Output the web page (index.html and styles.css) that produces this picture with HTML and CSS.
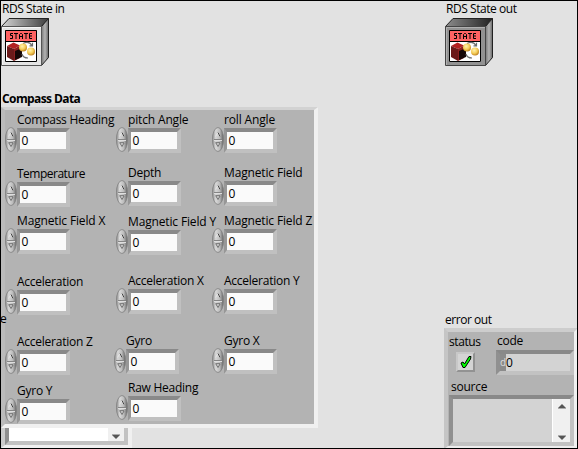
FILE: index.html
```html
<!DOCTYPE html>
<html lang="en">
<head>
<meta charset="utf-8">
<title>RDS Compass Data</title>
<link rel="stylesheet" href="styles.css">
</head>
<body>
<svg class="defs" width="0" height="0">
  <defs>
    <linearGradient id="metal" x1="0" y1="0" x2="1" y2="0">
      <stop offset="0" stop-color="#8c8c8c"/><stop offset=".3" stop-color="#d8d8d8"/>
      <stop offset=".65" stop-color="#bcbcbc"/><stop offset="1" stop-color="#606060"/>
    </linearGradient>
    <linearGradient id="lid" x1="0" y1="0" x2="1" y2="0">
      <stop offset="0" stop-color="#d5d5d5"/><stop offset="1" stop-color="#3c3c3c"/>
    </linearGradient>
    <linearGradient id="lid-dark" x1="0" y1="0" x2="1" y2="0">
      <stop offset="0" stop-color="#8c8c8c"/><stop offset="1" stop-color="#222"/>
    </linearGradient>
    <linearGradient id="side" x1="0" y1="0" x2="1" y2="0">
      <stop offset="0" stop-color="#777"/><stop offset=".5" stop-color="#b4b4b4"/><stop offset="1" stop-color="#666"/>
    </linearGradient>
    <radialGradient id="gold" cx=".4" cy=".35" r=".7">
      <stop offset="0" stop-color="#fff2b0"/><stop offset=".55" stop-color="#f5cd58"/><stop offset="1" stop-color="#b87818"/>
    </radialGradient>
    <symbol id="spin" viewBox="0 0 12 25">
      <ellipse cx="6" cy="12.5" rx="5.6" ry="12" fill="url(#metal)" stroke="#808080" stroke-width=".8"/>
      <path d="M2 12.5H10" stroke="#858585"/>
      <path d="M2 13.5H10" stroke="#dedede"/>
      <path d="M3.5 9.5L6 5.5L8 9.5" fill="#d2d2d2" stroke="#e6e6e6"/>
      <path d="M6 5.5L8 9.5" fill="none" stroke="#444"/>
      <path d="M8 16L6 19.5L3.7 15.7H8" fill="#d0d0d0" stroke="#666" stroke-width=".9"/>
    </symbol>
    <symbol id="state" viewBox="0 0 32 32">
      <path d="M0 0H32V32H0Z" fill="#fff"/>
      <path d="M0 0H32V12H0Z" fill="#ff6262"/>
      <path d="M.5 .5H31.5V31.5H.5ZM0 11.5H32" fill="none" stroke="#000"/>
      <g fill="none" stroke="#000">
        <path d="M8 3.5H5.5V5.5H7.5V8.5H5M9 3.5H13M11 3.5V9M14.5 9V4.5L15.5 3.5H16.5L17.5 4.5V9M15 6.5H17M19 3.5H23M21 3.5V9M27 3.5H24.5V8.5H27M25 6H27"/>
      </g>
      <path d="M2 16L8.5 12.5L15 15.5L9 19Z" fill="#b32222"/>
      <path d="M2 16L9 19V31L2 27Z" fill="#6b1a1a"/>
      <path d="M9 19L15 15.5V28L9 31Z" fill="#8c2020"/>
      <path d="M10 21L17 18V27L10 30Z" fill="#160707"/>
      <g fill="none" stroke="#6d6d6d" stroke-width="1.2">
        <path d="M18 13.5Q24 10.5 27 15.5M24.5 15.8H27.5V12.7M23 28Q18 28 17 24"/>
      </g>
      <circle cx="18" cy="17.5" r="4" fill="url(#gold)"/>
      <circle cx="26" cy="21.5" r="4" fill="url(#gold)"/>
    </symbol>
  </defs>
</svg>
<main class="panel">
  <section class="ref ref-in">
    <span class="label">RDS State in</span>
    <svg width="48" height="48" viewBox="0 0 48 48">
      <path d="M.5 8.5L8 .5H47.5L40.5 8.5Z" fill="url(#lid)" stroke="#222"/>
      <path d="M40.5 8.5L47.5 .5V39.5L40.5 47.5Z" fill="url(#side)" stroke="#222"/>
      <path d="M.5 8.5H40.5V47.5H.5Z" fill="#e4e4e4" stroke="#555"/>
      <path d="M1.5 47V9.5H40" fill="none" stroke="#f5f5f5"/>
      <use href="#state" x="4" y="12" width="32" height="32"/>
    </svg>
  </section>
  <section class="ref ref-out">
    <span class="label">RDS State out</span>
    <svg width="48" height="48" viewBox="0 0 48 48">
      <path d="M.5 8.5L8 .5H47.5L40.5 8.5Z" fill="url(#lid-dark)" stroke="#222"/>
      <path d="M40.5 8.5L47.5 .5V39.5L40.5 47.5Z" fill="url(#side)" stroke="#222"/>
      <path d="M.5 8.5H40.5V47.5H.5Z" fill="#929292" stroke="#444"/>
      <path d="M1.5 47V9.5H40" fill="none" stroke="#b0b0b0"/>
      <use href="#state" x="4" y="12" width="32" height="32"/>
    </svg>
  </section>

  <section class="error-in">
    <div class="in-frame">
      <div class="in-source"><div class="in-scroll"><svg width="8" height="5" viewBox="0 0 8 5"><path d="M0 1H8L4 5Z" fill="#555"/><path d="M0 .5H8" stroke="#aaa"/></svg></div></div>
    </div>
  </section>

  <section class="compass">
    <h1 class="title">Compass Data</h1>
    <div class="cluster">
      <div class="column">
        <div class="control"><span class="label">Compass Heading</span><div class="field"><svg class="spin"><use href="#spin"/></svg><span class="value">0</span></div></div>
        <div class="control gap12"><span class="label tight">Temperature</span><div class="field"><svg class="spin"><use href="#spin"/></svg><span class="value">0</span></div></div>
        <div class="control gap5"><span class="label loose">Magnetic Field X</span><div class="field"><svg class="spin"><use href="#spin"/></svg><span class="value">0</span></div></div>
        <div class="control gap19"><span class="label">Acceleration</span><div class="field"><svg class="spin"><use href="#spin"/></svg><span class="value">0</span></div></div>
        <div class="control gap18"><span class="label">Acceleration Z</span><div class="field"><svg class="spin"><use href="#spin"/></svg><span class="value">0</span></div></div>
        <div class="control gap7"><span class="label">Gyro Y</span><div class="field"><svg class="spin"><use href="#spin"/></svg><span class="value">0</span></div></div>
      </div>
      <div class="column">
        <div class="control"><span class="label loose">pitch Angle</span><div class="field"><svg class="spin"><use href="#spin"/></svg><span class="value">0</span></div></div>
        <div class="control gap11"><span class="label">Depth</span><div class="field"><svg class="spin"><use href="#spin"/></svg><span class="value">0</span></div></div>
        <div class="control gap7"><span class="label loose">Magnetic Field Y</span><div class="field"><svg class="spin"><use href="#spin"/></svg><span class="value">0</span></div></div>
        <div class="control gap17"><span class="label">Acceleration X</span><div class="field"><svg class="spin"><use href="#spin"/></svg><span class="value">0</span></div></div>
        <div class="control gap18 outdent"><span class="label">Gyro</span><div class="field"><svg class="spin"><use href="#spin"/></svg><span class="value">0</span></div></div>
        <div class="control gap5"><span class="label">Raw Heading</span><div class="field"><svg class="spin"><use href="#spin"/></svg><span class="value">0</span></div></div>
      </div>
      <div class="column">
        <div class="control"><span class="label loose">roll Angle</span><div class="field"><svg class="spin"><use href="#spin"/></svg><span class="value">0</span></div></div>
        <div class="control gap11"><span class="label loose">Magnetic Field</span><div class="field"><svg class="spin"><use href="#spin"/></svg><span class="value">0</span></div></div>
        <div class="control gap6"><span class="label loose">Magnetic Field Z</span><div class="field"><svg class="spin"><use href="#spin"/></svg><span class="value">0</span></div></div>
        <div class="control gap18"><span class="label">Acceleration Y</span><div class="field"><svg class="spin"><use href="#spin"/></svg><span class="value">0</span></div></div>
        <div class="control gap18"><span class="label">Gyro X</span><div class="field"><svg class="spin"><use href="#spin"/></svg><span class="value">0</span></div></div>
      </div>
    </div>
  </section>
  <span class="label peek">e</span>

  <section class="error-out">
    <span class="label">error out</span>
    <div class="out-frame">
      <div class="out-top">
        <div class="status"><span class="label">status</span>
          <div class="led"><svg width="12" height="14" viewBox="0 0 12 14"><path d="M1 8L3 7L4.5 9L9 1.5H11L10.5 4L5 12.5H3Z" fill="#0f0" stroke="#000"/></svg></div>
        </div>
        <div class="code"><span class="label">code</span>
          <div class="code-field"><span class="radix">d</span><span>0</span></div>
        </div>
      </div>
      <span class="label source-label">source</span>
      <div class="source-field"><div class="out-scroll">
        <svg width="8" height="5" viewBox="0 0 8 5"><path d="M0 4H8L4 0Z" fill="#555"/><path d="M0 4.5H8" stroke="#aaa"/></svg>
        <svg width="8" height="5" viewBox="0 0 8 5"><path d="M0 1H8L4 5Z" fill="#555"/><path d="M0 .5H8" stroke="#aaa"/></svg>
      </div></div>
    </div>
  </section>
</main>
</body>
</html>
```
FILE: styles.css
```css
* { box-sizing: border-box; }
body { margin: 0; font: 12px/16px "Open Sans", "Noto Sans", sans-serif; color: #000; }
.defs { position: absolute; }
.panel { position: relative; width: 578px; height: 449px; overflow: hidden; background: #e2e2e2; border: 1px solid #000; }
.label { display: block; white-space: nowrap; letter-spacing: -.25px; }
.label.loose { letter-spacing: -.15px; }
.label.tight { letter-spacing: -.5px; }

/* Front-panel objects, each placed freely on the canvas */
.ref, .error-in, .compass, .error-out, .peek { position: absolute; }
.ref svg { display: block; margin-top: 1px; }
.ref-in { left: 0; top: 0; }
.ref .label { padding-left: 1px; letter-spacing: -.45px; }
.ref-out { left: 444px; top: 0; }
.compass { left: 0; top: 90px; }
.error-in { left: 0; top: 327px; }
.error-out { left: 443px; top: 311px; }
.peek { left: -1px; top: 310px; }

.title { margin: 0; padding-left: 1px; font-size: 12px; font-weight: 700; line-height: 16px; letter-spacing: -.6px; }
.cluster { display: flex; width: 317px; height: 321px; background: #b3b3b3; border: solid; border-width: 3px 4px 4px 4px; border-color: #d2d2d2 #f0f0f0 #f0f0f0 #bbb; padding-top: 2px; }
.column { width: 96px; }
.column:first-child { width: 111px; }
.control { width: 65px; height: 42px; }
.control .label { margin-left: 12px; height: 16px; }
.field { display: flex; height: 26px; }
.spin { width: 12px; height: 25px; margin-top: -1px; flex: none; }
.value { width: 53px; height: 25px; border: solid; border-width: 4px 4px 4px 3px; border-color: #898989 #c0c0c0 #c0c0c0 #979797; background: #fafafa; line-height: 18px; padding-left: 1.5px; }
.gap5 { margin-top: 5px; }
.gap6 { margin-top: 6px; }
.gap7 { margin-top: 7px; }
.gap11 { margin-top: 11px; }
.gap12 { margin-top: 12px; }
.gap17 { margin-top: 17px; }
.gap18 { margin-top: 18px; }
.gap19 { margin-top: 19px; }
.outdent { margin-left: -2px; }

.in-frame { width: 131px; height: 120px; border: solid; border-width: 3px 4px 3px 4px; border-color: #ccc #f0f0f0 #f0f0f0 #ccc; background: #b3b3b3; }
.in-source { width: 123px; height: 114px; background: #fff; border: solid; border-width: 4px; border-color: #888 #c2c2c2 #c2c2c2 #909090; display: flex; justify-content: flex-end; }
.in-scroll { width: 16px; background: #f0f0f0; display: flex; align-items: flex-end; justify-content: center; padding-bottom: 2px; }

.error-out > .label { padding-left: 1px; letter-spacing: -.45px; }
.out-frame { width: 134px; height: 121px; background: #b3b3b3; border: solid; border-width: 4px 4px 3px 4px; border-color: #cdcdcd #f0f0f0 #ededed #c5c5c5; padding-left: 1px; }
.out-top { display: flex; height: 49px; }
.status { width: 47px; padding-top: 2px; }
.status .label { letter-spacing: -.4px; }
.led { margin: 2px 0 0 7px; width: 19px; height: 20px; border: 2px solid; border-color: #c8c8c8 #929292 #929292 #c8c8c8; background: #d4d4d4; display: flex; align-items: center; justify-content: center; }
.code { padding-top: 1px; }
.code .label { padding-left: 1px; }
.code-field { display: flex; width: 78px; height: 25px; margin-top: 1px; border: solid; border-width: 4px; border-color: #898989 #c2c2c2 #c2c2c2 #909090; background: #d3d3d3; line-height: 17px; }
.radix { background: #8b8b8b; color: #ddd; width: 6px; font-size: 10px; }
.source-label { margin-left: 2px; height: 16px; margin-top: -2px; }
.source-field { width: 125px; height: 51px; border: solid; border-width: 4px; border-color: #898989 #c2c2c2 #c2c2c2 #909090; background: #d3d3d3; display: flex; justify-content: flex-end; }
.out-scroll { width: 18px; background: #f0f0f0; border-left: 1px solid #fff; display: flex; flex-direction: column; align-items: center; justify-content: space-between; padding: 5px 0 2px; }
```
